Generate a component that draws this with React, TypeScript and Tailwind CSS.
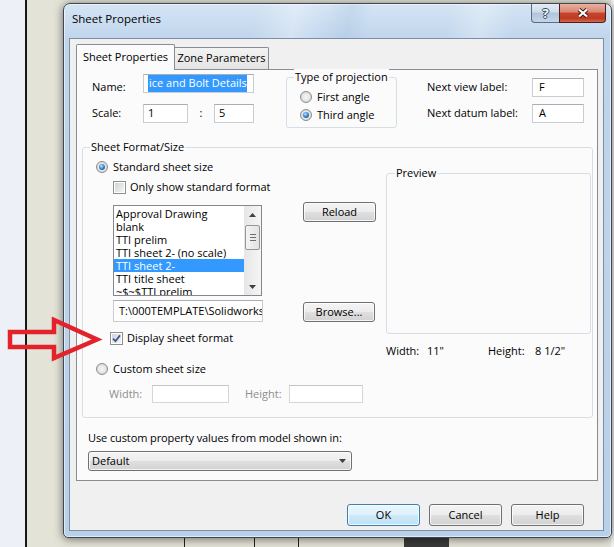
import type { ReactNode } from 'react';

const PAGE = 'bg-[#fbfbfb]';

function Radio({ checked = false }: { checked?: boolean }) {
  return (
    <span className="flex h-[12px] w-[12px] shrink-0 items-center justify-center rounded-full border border-[#8b8b8b] bg-[radial-gradient(circle_at_50%_50%,#f6f6f6_0%,#e4e4e4_55%,#c8cacd_100%)]">
      {checked && (
        <span className="h-[6px] w-[6px] rounded-full bg-[radial-gradient(circle_at_40%_35%,#c2e9ff_0%,#3a8ad6_45%,#0f3f86_100%)]" />
      )}
    </span>
  );
}

function CheckBox({ checked = false }: { checked?: boolean }) {
  return (
    <span className="flex h-[13px] w-[13px] shrink-0 items-center justify-center border border-[#8e8f8f] bg-[linear-gradient(135deg,#cdd1d6,#f7f7f7)] shadow-[inset_0_0_0_1px_#fff]">
      {checked && (
        <svg width="9" height="9" viewBox="0 0 9 9" fill="none">
          <path d="M1 4.6 L3.5 7.1 L8 1.4" stroke="#41558f" strokeWidth="1.7" />
        </svg>
      )}
    </span>
  );
}

function TextBox({ className = '', children }: { className?: string; children?: ReactNode }) {
  return (
    <div
      className={`flex shrink-0 items-center overflow-hidden whitespace-nowrap border border-[#c9ccd2] border-t-[#abadb3] bg-white pl-[4px] ${className}`}
    >
      {children}
    </div>
  );
}

function Button({ className = '', primary = false, children }: { className?: string; primary?: boolean; children: ReactNode }) {
  return (
    <div
      className={`flex shrink-0 items-center justify-center rounded-[3px] border shadow-[inset_0_0_0_1px_rgba(255,255,255,0.75)] ${
        primary
          ? 'border-[#3c7fb1] bg-[linear-gradient(#eaf6fd_0%,#dff1fb_50%,#cce9f8_51%,#bfe2f5_100%)]'
          : 'border-[#707070] bg-[linear-gradient(#f4f4f4_0%,#ececec_50%,#dfdfdf_51%,#d2d2d2_100%)]'
      } ${className}`}
    >
      {children}
    </div>
  );
}

function Arrow({ up = false }: { up?: boolean }) {
  return (
    <svg width="7" height="4" viewBox="0 0 7 4">
      <path d={up ? 'M0 4 L3.5 0 L7 4 Z' : 'M0 0 L3.5 4 L7 0 Z'} fill="#3f3f3f" />
    </svg>
  );
}

const formats = [
  'Approval Drawing',
  'blank',
  'TTI prelim',
  'TTI sheet 2- (no scale)',
  'TTI sheet 2-',
  'TTI title sheet',
  '~$~$TTI prelim',
];

function FormatList() {
  return (
    <div className="ml-[17px] mt-[3px] flex h-[91px] w-[149px] shrink-0 border border-[#828790] bg-white">
      <div className="flex-1 overflow-hidden pt-[1px]">
        {formats.map((f) => (
          <div
            key={f}
            className={`h-[13px] whitespace-nowrap pl-[2px] leading-[13px] ${f === 'TTI sheet 2-' ? 'bg-[#3399ff] text-white' : ''}`}
          >
            {f}
          </div>
        ))}
      </div>
      <div className="flex w-[17px] flex-col bg-[linear-gradient(90deg,#e6e6e6,#f5f5f5)]">
        <div className="flex h-[17px] items-center justify-center">
          <Arrow up />
        </div>
        <div className="mx-[1px] mt-[2px] flex h-[25px] flex-col items-center justify-center gap-[2px] rounded-[2px] border border-[#979797] bg-[linear-gradient(90deg,#f4f4f4,#e2e2e2)]">
          <span className="h-px w-[6px] bg-[#6f6f6f]" />
          <span className="h-px w-[6px] bg-[#6f6f6f]" />
          <span className="h-px w-[6px] bg-[#6f6f6f]" />
        </div>
        <div className="flex-1" />
        <div className="flex h-[17px] items-center justify-center">
          <Arrow />
        </div>
      </div>
    </div>
  );
}

function SheetPropertiesPage() {
  return (
    <div className={`ml-[6px] flex h-[412px] w-[522px] flex-col border border-[#898c95] pt-[4px] ${PAGE}`}>
      {/* name / scale / projection / labels */}
      <div className="flex items-start">
        <div className="ml-[15px] flex flex-col">
          <div className="flex h-[19px] items-start">
            <span className="mt-[5px] w-[51px]">Name:</span>
            <TextBox className="h-[19px] w-[111px]">
              <span className="bg-[#3399ff] pl-[1px] text-white">ice and Bolt Details</span>
            </TextBox>
          </div>
          <div className="mt-[11px] flex h-[19px] items-center">
            <span className="w-[51px]">Scale:</span>
            <TextBox className="h-[19px] w-[45px]">1</TextBox>
            <span className="w-[26px] text-center">:</span>
            <TextBox className="h-[19px] w-[40px]">5</TextBox>
          </div>
        </div>

        <div className="relative ml-[32px] mt-[3px] h-[51px] w-[111px] rounded-[3px] border border-[#d5dfe5] pl-[13px] pt-[12px]">
          <span className={`absolute -top-[9px] left-[7px] px-[1px] ${PAGE}`}>Type of projection</span>
          <div className="flex h-[14px] items-center">
            <Radio />
            <span className="ml-[5px]">First angle</span>
          </div>
          <div className="mt-[4px] flex h-[14px] items-center">
            <Radio checked />
            <span className="ml-[5px]">Third angle</span>
          </div>
        </div>

        <div className="ml-[30px] mt-[4px] flex flex-col">
          <div className="flex h-[19px] items-center">
            <span className="w-[105px]">Next view label:</span>
            <TextBox className="h-[19px] w-[52px] pl-[6px]">F</TextBox>
          </div>
          <div className="mt-[7px] flex h-[19px] items-center">
            <span className="w-[105px]">Next datum label:</span>
            <TextBox className="h-[19px] w-[52px] pl-[6px]">A</TextBox>
          </div>
        </div>
      </div>

      {/* sheet format / size */}
      <div className="relative ml-[5px] mt-[19px] flex h-[271px] w-[511px] rounded-[3px] border border-[#d5dfe5]">
        <span className={`absolute -top-[9px] left-[7px] px-[1px] ${PAGE}`}>Sheet Format/Size</span>

        <div className="flex w-[293px] shrink-0 flex-col pl-[13px] pt-[12px]">
          <div className="flex h-[14px] items-center">
            <Radio checked />
            <span className="ml-[5px]">Standard sheet size</span>
          </div>
          <div className="ml-[17px] mt-[6px] flex h-[14px] items-center">
            <CheckBox />
            <span className="ml-[4px]">Only show standard format</span>
          </div>
          <div className="mt-[8px] flex items-start">
            <FormatList />
            <Button className="ml-[41px] h-[20px] w-[73px]">Reload</Button>
          </div>
          <div className="mt-[4px] flex items-start">
            <TextBox className="ml-[17px] h-[22px] w-[150px] pl-[5px]">{'T:\\000TEMPLATE\\Solidworks'}</TextBox>
            <Button className="ml-[40px] mt-[2px] h-[20px] w-[72px]">Browse...</Button>
          </div>
          <div className="ml-[14px] mt-[9px] flex h-[14px] items-center">
            <CheckBox checked />
            <span className="ml-[4px]">Display sheet format</span>
          </div>
          <div className="mt-[17px] flex h-[14px] items-center">
            <Radio />
            <span className="ml-[5px]">Custom sheet size</span>
          </div>
          <div className="mt-[9px] flex h-[18px] items-center">
            <span className="ml-[13px] w-[43px] text-[#8d8d8d]">Width:</span>
            <TextBox className="h-[18px] w-[77px] border-[#d4d6da] border-t-[#c2c4c8]" />
            <span className="ml-[16px] w-[44px] text-[#8d8d8d]">Height:</span>
            <TextBox className="h-[18px] w-[74px] border-[#d4d6da] border-t-[#c2c4c8]" />
          </div>
        </div>

        <div className="ml-[10px] flex flex-col pt-[25px]">
          <div className="relative h-[161px] w-[205px] rounded-[3px] border border-[#d5dfe5]">
            <span className={`absolute -top-[9px] left-[8px] px-[1px] ${PAGE}`}>Preview</span>
          </div>
          <div className="mt-[10px] flex h-[14px] items-center whitespace-nowrap">
            <span className="w-[41px]">Width:</span>
            <span className="w-[61px]">11"</span>
            <span className="w-[47px]">Height:</span>
            <span>8 1/2"</span>
          </div>
        </div>
      </div>

      {/* custom property source */}
      <div className="ml-[11px] mt-[13px] flex h-[14px] items-center tracking-[-0.1px]">
        Use custom property values from model shown in:
      </div>
      <div className="ml-[11px] mt-[6px] flex h-[20px] w-[264px] items-center justify-between rounded-[3px] border border-[#707070] bg-[linear-gradient(#f4f4f4_0%,#ececec_50%,#dfdfdf_51%,#d2d2d2_100%)] pl-[3px] pr-[5px] shadow-[inset_0_0_0_1px_rgba(255,255,255,0.75)]">
        <span>Default</span>
        <Arrow />
      </div>
    </div>
  );
}

export default function App() {
  return (
    <div className="relative flex h-[547px] w-[614px] overflow-hidden font-['Open_Sans',sans-serif] text-[11px] text-black">
      {/* desktop behind the dialog */}
      <div className="w-[25px] bg-[#edf1f7]" />
      <div className="w-[2px] bg-[#161616]" />
      <div className="flex-1 bg-[#e3e3d7]" />
      <div className="w-[3px] bg-[#f2f2f2]" />
      <div className="absolute bottom-0 left-[184px] h-[12px] w-px bg-[#222]" />
      <div className="absolute bottom-0 left-[254px] h-[12px] w-px bg-[#222]" />
      <div className="absolute bottom-0 left-[298px] h-[12px] w-px bg-[#222]" />
      <div className="absolute bottom-0 left-[404px] h-[12px] w-[45px] bg-[#3b3b3b]" />

      {/* dialog window */}
      <div className="absolute left-[63px] top-[3px] flex h-[535px] w-[549px] flex-col rounded-t-[7px] rounded-b-[5px] border border-[#3d4755] bg-[linear-gradient(180deg,#d4e4f4_0%,#bfd5ec_7%,#b9d0e9_100%)] shadow-[0_1px_10px_rgba(0,0,0,0.55),inset_0_0_0_1px_rgba(255,255,255,0.55)]">
        <div className="flex h-[34px] shrink-0 rounded-t-[6px] bg-[linear-gradient(100deg,rgba(255,255,255,0)_35%,rgba(255,255,255,0.3)_42%,rgba(255,255,255,0)_48%,rgba(120,150,190,0.12)_52%,rgba(255,255,255,0)_56%,rgba(255,255,255,0)_70%,rgba(255,255,255,0.28)_76%,rgba(255,255,255,0)_82%)]">
          <span className="ml-[8px] mt-[6px] text-[11.5px]">Sheet Properties</span>
          <div className="ml-auto mr-[5px] flex h-[19px]">
            <div className="flex w-[28px] items-center justify-center rounded-bl-[4px] border border-r-0 border-t-0 border-[#5b6d82] bg-[linear-gradient(#e3ecf6_0%,#cfdcea_45%,#b0c5dc_50%,#c3d5e8_100%)]">
              <span className="text-[13px] font-bold leading-none text-[#f4f7fb] [text-shadow:1px_0_0_#3b4a5c,-1px_0_0_#3b4a5c,0_1px_0_#3b4a5c,0_-1px_0_#3b4a5c]">?</span>
            </div>
            <div className="flex w-[47px] items-center justify-center rounded-br-[4px] border border-t-0 border-[#4e1d14] bg-[linear-gradient(#eab0a2_0%,#d98672_45%,#c7452f_50%,#bf3a22_80%,#d46a50_100%)]">
              <svg width="12" height="10" viewBox="0 0 12 10">
                <path d="M2 1.5 L10 8.5 M10 1.5 L2 8.5" stroke="#3a1610" strokeWidth="4" />
                <path d="M2 1.5 L10 8.5 M10 1.5 L2 8.5" stroke="#fff" strokeWidth="2.3" />
              </svg>
            </div>
          </div>
        </div>

        <div className="mb-[6px] ml-[5px] mr-[7px] flex flex-1 flex-col border border-[#7b8ea4] bg-[#f0f0f0]">
          <div className="ml-[6px] mt-[5px] flex h-[25px] items-end">
            <div className={`relative z-10 -mb-px flex h-[26px] w-[99px] items-center justify-center rounded-t-[2px] border border-b-0 border-[#898c95] ${PAGE}`}>
              Sheet Properties
            </div>
            <div className="flex h-[22px] w-[94px] items-center justify-center rounded-tr-[2px] border border-b-0 border-l-0 border-[#898c95] bg-[linear-gradient(#f3f3f3,#e4e4e4)]">
              Zone Parameters
            </div>
          </div>
          <SheetPropertiesPage />
          <div className="mt-[23px] flex justify-end gap-[9px] pr-[19px]">
            <Button primary className="h-[22px] w-[73px]">OK</Button>
            <Button className="h-[22px] w-[73px]">Cancel</Button>
            <Button className="h-[22px] w-[73px]">Help</Button>
          </div>
        </div>
      </div>

      {/* red annotation arrow */}
      <svg className="absolute left-0 top-[310px]" width="104" height="56" viewBox="0 310 104 56">
        <path
          d="M10 332 L54 332 L54 320 L97 339.5 L54 358 L54 347 L10 347 Z"
          fill="none"
          stroke="#e3222b"
          strokeWidth="4.5"
          strokeLinejoin="miter"
        />
      </svg>
    </div>
  );
}
